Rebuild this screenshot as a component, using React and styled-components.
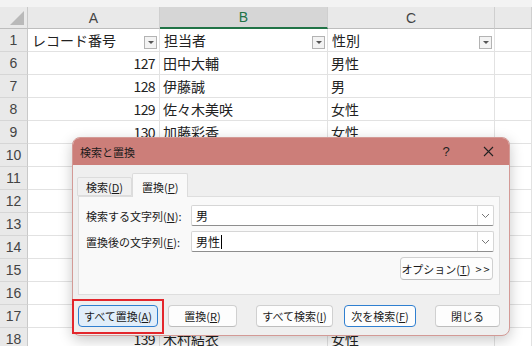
import React from "react";
import styled, { createGlobalStyle } from "styled-components";

const GlobalStyle = createGlobalStyle`
  html, body {
    margin: 0;
    padding: 0;
    background: #ffffff;
  }
  body {
    font-family: "Noto Sans CJK JP", "Noto Sans", sans-serif;
    color: #222;
  }
  * {
    box-sizing: border-box;
  }
`;

const Screen = styled.div`
  position: relative;
  width: 532px;
  height: 346px;
  overflow: hidden;
  background: #fff;
`;

const TopStrip = styled.div`
  height: 7px;
  background: #f3f3f3;
`;

const Sheet = styled.div`
  display: grid;
  grid-template-columns: 28px 132px 168px 167px 1fr;
  grid-template-rows: 22px;
  grid-auto-rows: 23px;
`;

const Corner = styled.div`
  background: #e9e9e9;
  border-right: 1px solid #c9c9c9;
  border-bottom: 1px solid #bdbdbd;
  display: flex;
  align-items: flex-end;
  justify-content: flex-end;
  padding: 0 3px 3px 0;
`;

const ColHead = styled.div`
  display: flex;
  align-items: center;
  justify-content: center;
  font-family: "Liberation Sans", "Noto Sans", sans-serif;
  font-size: 14px;
  background: ${(p) => (p.$active ? "#d6d6d6" : "#e9e9e9")};
  color: ${(p) => (p.$active ? "#217346" : "#444")};
  border-right: 1px solid #cfcfcf;
  border-bottom: ${(p) => (p.$active ? "2px solid #217346" : "1px solid #bdbdbd")};
`;

const RowHead = styled.div`
  display: flex;
  align-items: center;
  justify-content: center;
  font-family: "Liberation Sans", "Noto Sans", sans-serif;
  font-size: 14px;
  color: #444;
  background: #e9e9e9;
  border-right: 1px solid #c9c9c9;
  border-bottom: 1px solid #d6d6d6;
`;

const Cell = styled.div`
  display: flex;
  align-items: center;
  justify-content: ${(p) => (p.$right ? "flex-end" : "flex-start")};
  padding: 0 3px;
  font-size: 14px;
  color: #222;
  white-space: nowrap;
  overflow: hidden;
  border-right: 1px solid #e2e2e2;
  border-bottom: 1px solid #e2e2e2;
`;

const Num = styled.span`
  letter-spacing: -0.6px;
  padding-right: 1px;
`;

const FilterCell = styled(Cell)`
  justify-content: space-between;
  padding: 0 2px 0 4px;
`;

const FilterButton = styled.span`
  width: 13px;
  height: 13px;
  margin-top: 4px;
  border: 1px solid #b3b3b3;
  background: #f3f3f3;
  display: flex;
  align-items: center;
  justify-content: center;

  &:after {
    content: "";
    border-left: 3px solid transparent;
    border-right: 3px solid transparent;
    border-top: 3px solid #555;
  }
`;

const Dialog = styled.div`
  position: absolute;
  left: 72px;
  top: 137px;
  width: 438px;
  height: 199px;
  border: 1px solid #d39a96;
  border-radius: 8px;
  background: #efefef;
  box-shadow: 0 4px 14px rgba(0, 0, 0, 0.22);
  font-size: 11px;
  color: #1b1b1b;
`;

const TitleBar = styled.div`
  height: 27px;
  background: #cc7e79;
  border-radius: 7px 7px 0 0;
  display: flex;
  align-items: center;
  padding-left: 7px;
`;

const Title = styled.div`
  flex: 1;
  font-size: 11px;
`;

const TitleButton = styled.div`
  width: 42px;
  height: 27px;
  display: flex;
  align-items: center;
  justify-content: center;
  font-family: "Liberation Sans", sans-serif;
  font-size: 13px;
  color: #222;
`;

const Body = styled.div`
  padding: 8px 9px 9px 5px;
`;

const Tabs = styled.div`
  display: flex;
  align-items: flex-end;
  height: 23px;
  margin-left: -1px;
`;

const Tab = styled.div`
  height: ${(p) => (p.$active ? "24px" : "19px")};
  margin-bottom: ${(p) => (p.$active ? "-1px" : "0")};
  padding: ${(p) => (p.$active ? "2px 9px 0" : "0 8px")};
  display: flex;
  align-items: center;
  background: ${(p) => (p.$active ? "#f9f9f9" : "#f0f0f0")};
  border: 1px solid #dcdcdc;
  border-bottom: ${(p) => (p.$active ? "none" : "1px solid #dcdcdc")};
  border-radius: 2px 2px 0 0;
  position: relative;
  font-size: 11px;
`;

const Panel = styled.div`
  height: 99px;
  background: #f9f9f9;
  border: 1px solid #dedede;
  padding: 8px 5px 0 7px;
`;

const FieldRow = styled.div`
  display: grid;
  grid-template-columns: 105px 1fr;
  align-items: center;
  margin-bottom: 5px;
`;

const Label = styled.div`
  font-size: 11px;
  color: #1b1b1b;
`;

const Combo = styled.div`
  height: 21px;
  display: flex;
  background: #fff;
  border: 1px solid #d6d6d6;
  border-bottom: 1px solid #8e8e8e;
  border-radius: 2px;
`;

const ComboText = styled.div`
  flex: 1;
  display: flex;
  align-items: center;
  padding-left: 4px;
  font-size: 12px;
  color: #111;
`;

const Caret = styled.span`
  width: 1px;
  height: 14px;
  background: #000;
  margin-left: 1px;
`;

const ComboArrow = styled.div`
  width: 16px;
  display: flex;
  align-items: center;
  justify-content: center;
  border-left: 1px solid #dcdcdc;
`;

const OptionRow = styled.div`
  display: flex;
  justify-content: flex-end;
  margin-top: 5px;
  padding-right: 1px;
`;

const Arrows = styled.span`
  margin-left: 5px;
  letter-spacing: 2px;
`;

const Button = styled.div`
  position: relative;
  height: ${(p) => p.$h || 22}px;
  width: ${(p) => p.$w}px;
  display: flex;
  align-items: center;
  justify-content: center;
  border-radius: 4px;
  font-size: 11px;
  color: #1b1b1b;
  white-space: nowrap;
  background: ${(p) => (p.$pressed ? "#e1eefa" : "#fdfdfd")};
  border: 1px solid ${(p) => (p.$focus ? "#2f7fd0" : "#d0d0d0")};
  border-bottom-color: ${(p) => (p.$focus ? "#2f7fd0" : "#bdbdbd")};

  &:after {
    content: "";
    display: ${(p) => (p.$marked ? "block" : "none")};
    position: absolute;
    left: -7px;
    right: -7px;
    top: -7px;
    bottom: -8px;
    border: 2px solid #e3262c;
  }
`;

const ButtonBar = styled.div`
  display: flex;
  gap: 19px;
  margin-top: 10px;
`;

const ButtonGroup = styled.div`
  display: flex;
  gap: ${(p) => p.$gap}px;
`;

const Chevron = () => (
  <svg width="9" height="6" viewBox="0 0 9 6">
    <path d="M1 1 L4.5 4.5 L8 1" fill="none" stroke="#777" strokeWidth="1" />
  </svg>
);

const CloseIcon = () => (
  <svg width="11" height="11" viewBox="0 0 11 11">
    <path d="M1 1 L10 10 M10 1 L1 10" stroke="#222" strokeWidth="1.1" />
  </svg>
);

const CornerMark = () => (
  <svg width="14" height="14" viewBox="0 0 14 14">
    <polygon points="14,0 14,14 0,14" fill="#b9b9b9" />
  </svg>
);

const rows = [
  { n: 6, id: 127, name: "田中大輔", sex: "男性" },
  { n: 7, id: 128, name: "伊藤誠", sex: "男" },
  { n: 8, id: 129, name: "佐々木美咲", sex: "女性" },
  { n: 9, id: 130, name: "加藤彩香", sex: "女性" },
  { n: 10 },
  { n: 11 },
  { n: 12 },
  { n: 13 },
  { n: 14 },
  { n: 15 },
  { n: 16 },
  { n: 17 },
  { n: 18, id: 139, name: "木村結衣", sex: "女性" },
];

function App() {
  return (
    <Screen>
      <GlobalStyle />
      <TopStrip />
      <Sheet>
        <Corner>
          <CornerMark />
        </Corner>
        <ColHead>A</ColHead>
        <ColHead $active>B</ColHead>
        <ColHead>C</ColHead>
        <ColHead />

        <RowHead>1</RowHead>
        <FilterCell>
          <span>レコード番号</span>
          <FilterButton />
        </FilterCell>
        <FilterCell>
          <span>担当者</span>
          <FilterButton />
        </FilterCell>
        <FilterCell>
          <span>性別</span>
          <FilterButton />
        </FilterCell>
        <Cell />

        {rows.map((r) => (
          <React.Fragment key={r.n}>
            <RowHead>{r.n}</RowHead>
            <Cell $right>{r.id && <Num>{r.id}</Num>}</Cell>
            <Cell>{r.name}</Cell>
            <Cell>{r.sex}</Cell>
            <Cell />
          </React.Fragment>
        ))}
      </Sheet>

      <Dialog>
        <TitleBar>
          <Title>検索と置換</Title>
          <TitleButton>?</TitleButton>
          <TitleButton>
            <CloseIcon />
          </TitleButton>
        </TitleBar>
        <Body>
          <Tabs>
            <Tab>
              検索(<u>D</u>)
            </Tab>
            <Tab $active>
              置換(<u>P</u>)
            </Tab>
          </Tabs>
          <Panel>
            <FieldRow>
              <Label>
                検索する文字列(<u>N</u>):
              </Label>
              <Combo>
                <ComboText>男</ComboText>
                <ComboArrow>
                  <Chevron />
                </ComboArrow>
              </Combo>
            </FieldRow>
            <FieldRow>
              <Label>
                置換後の文字列(<u>E</u>):
              </Label>
              <Combo>
                <ComboText>
                  男性
                  <Caret />
                </ComboText>
                <ComboArrow>
                  <Chevron />
                </ComboArrow>
              </Combo>
            </FieldRow>
            <OptionRow>
              <Button $w={93} $h={23}>
                オプション(<u>T</u>)<Arrows>&gt;&gt;</Arrows>
              </Button>
            </OptionRow>
          </Panel>
          <ButtonBar>
            <ButtonGroup $gap={10}>
              <Button $w={80} $pressed $focus $marked>
                すべて置換(<u>A</u>)
              </Button>
              <Button $w={69}>
                置換(<u>R</u>)
              </Button>
            </ButtonGroup>
            <ButtonGroup $gap={11}>
              <Button $w={77}>
                すべて検索(<u>I</u>)
              </Button>
              <Button $w={72} $focus>
                次を検索(<u>F</u>)
              </Button>
            </ButtonGroup>
            <Button $w={68}>閉じる</Button>
          </ButtonBar>
        </Body>
      </Dialog>
    </Screen>
  );
}

export default App;
